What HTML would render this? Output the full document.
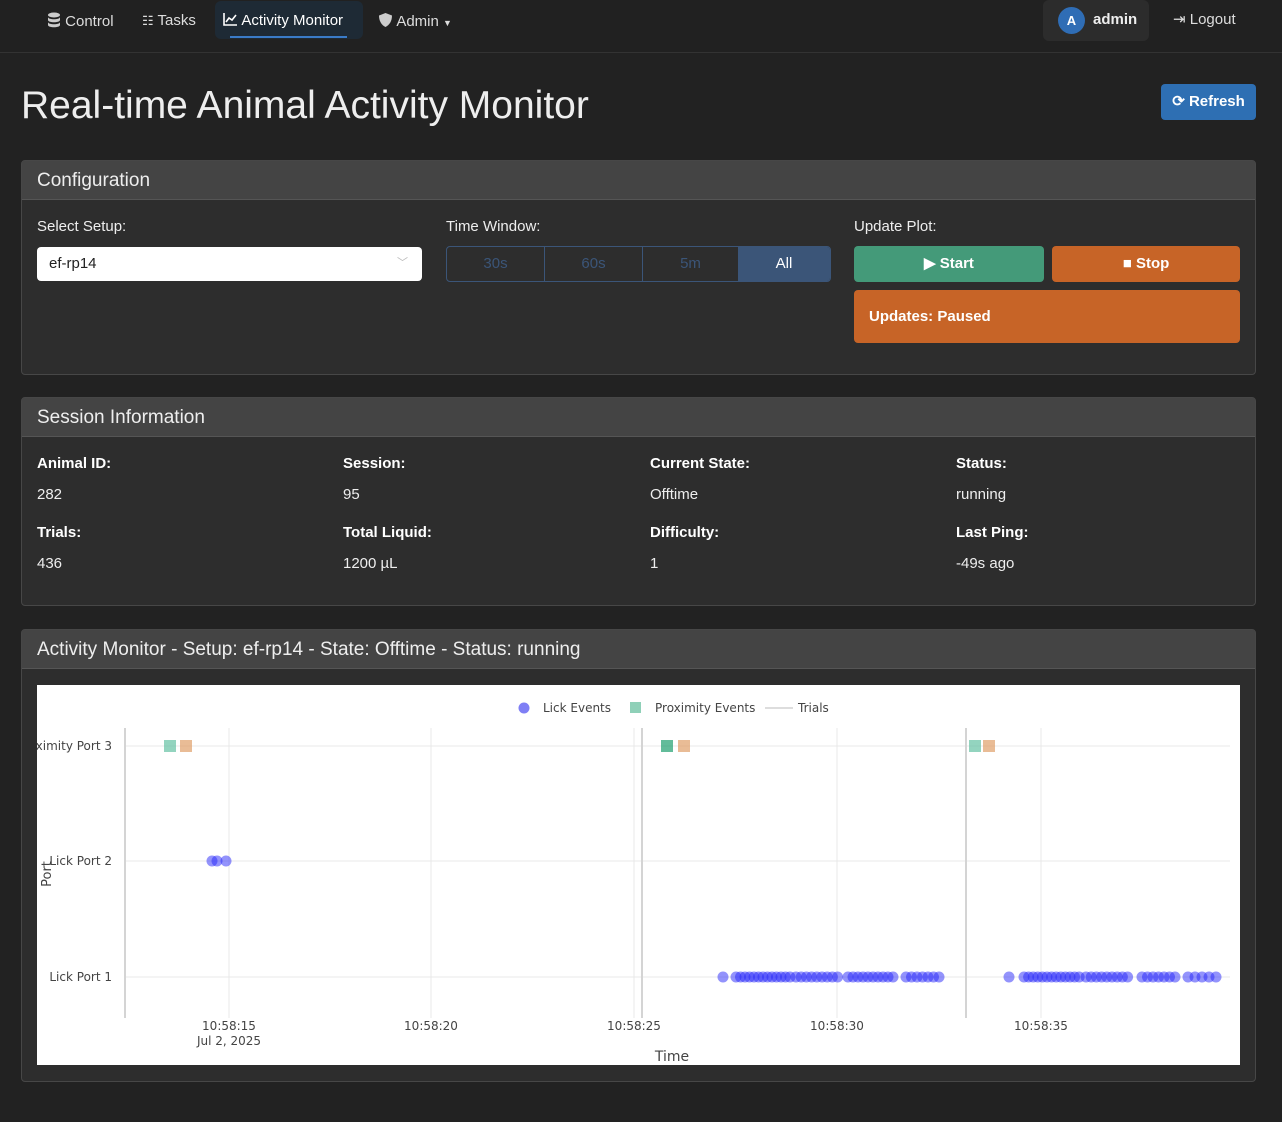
<!DOCTYPE html>
<html><head><meta charset="utf-8"><style>
*{box-sizing:border-box;margin:0;padding:0}
body{width:1282px;height:1122px;background:#222;font-family:"Liberation Sans",sans-serif;color:#fff;position:relative;overflow:hidden}
.a{position:absolute}
.nav{left:0;top:0;width:1282px;height:53px;background:#212121;border-bottom:1px solid #333}
.ni{font-size:15px;color:#ddd;top:12px}
.card{background:#2d2d2d;border:1px solid #474747;border-radius:4px}
.ch{position:absolute;left:0;top:0;right:0;height:39px;background:#444;border-bottom:1px solid #555;font-size:19px;color:#eee;padding:9px 15px}
.lbl{font-size:15px;color:#eee}
.b{font-weight:bold;font-size:15px}
.v{font-size:15px;color:#eee}
</style></head><body>
<div class="a nav"></div>
<div class="a ni" style="left:47px"><svg width="14" height="16" viewBox="0 0 14 16" style="vertical-align:-2px"><ellipse cx="7" cy="3" rx="6" ry="2.5" fill="#ccc"/><path d="M1 5c0 3 12 3 12 0v3c0 3-12 3-12 0zM1 10c0 3 12 3 12 0v3c0 3-12 3-12 0z" fill="#ccc"/></svg> Control</div>
<div class="a ni" style="left:142px"><span style="font-size:13px">☷</span> Tasks</div>
<div class="a" style="left:215px;top:1px;width:148px;height:38px;background:#1e2a35;border-radius:6px"></div>
<div class="a" style="left:230px;top:36px;width:117px;height:2px;background:#3a7bc8"></div>
<div class="a ni" style="left:223px;color:#fff"><svg width="15" height="14" viewBox="0 0 15 14" style="vertical-align:-1px"><path d="M1 1v12h13" stroke="#fff" stroke-width="1.6" fill="none"/><path d="M3 10l3-4 3 2 4-5" stroke="#fff" stroke-width="1.6" fill="none"/></svg> Activity Monitor</div>
<div class="a ni" style="left:378px"><svg width="15" height="16" viewBox="0 0 15 16" style="vertical-align:-2px"><path d="M7.5 1L14 3.5C14 9 11.5 13 7.5 15C3.5 13 1 9 1 3.5Z" fill="#ccc"/></svg> Admin <span style="font-size:9px">▼</span></div>
<div class="a" style="left:1043px;top:0;width:106px;height:41px;background:#2c2c2c;border-radius:6px"></div>
<div class="a" style="left:1058px;top:7px;width:27px;height:27px;border-radius:50%;background:#2f6db5;font-size:13px;font-weight:bold;text-align:center;line-height:27px">A</div>
<div class="a" style="left:1093px;top:11px;font-size:15px;font-weight:bold;color:#eee">admin</div>
<div class="a ni" style="left:1173px;top:10px">⇥ Logout</div>

<div class="a" style="left:21px;top:84px;font-size:39px;color:#eee">Real-time Animal Activity Monitor</div>
<div class="a" style="left:1161px;top:84px;width:95px;height:36px;background:#2e6fb3;border-radius:4px;font-size:15px;font-weight:bold;text-align:center;line-height:36px">⟳ Refresh</div>

<div class="a card" style="left:21px;top:160px;width:1235px;height:215px"><div class="ch">Configuration</div></div>
<div class="a lbl" style="left:37px;top:218px">Select Setup:</div>
<div class="a" style="left:37px;top:247px;width:385px;height:34px;background:#fff;border-radius:4px;color:#222;font-size:15px;padding:8px 12px">ef-rp14<span style="position:absolute;right:14px;top:7px;color:#bbb;font-size:11px">﹀</span></div>
<div class="a lbl" style="left:446px;top:218px">Time Window:</div>
<div class="a" style="left:446px;top:246px;width:385px;height:36px;border:1px solid #3b5578;border-radius:4px;overflow:hidden;display:flex;font-size:15px;color:#3b5578">
<div style="width:98px;border-right:1px solid #3b5578;text-align:center;line-height:34px">30s</div>
<div style="width:98px;border-right:1px solid #3b5578;text-align:center;line-height:34px">60s</div>
<div style="width:95px;text-align:center;line-height:34px">5m</div>
<div style="flex:1;background:#3b5578;color:#fff;text-align:center;line-height:34px">All</div></div>
<div class="a lbl" style="left:854px;top:218px">Update Plot:</div>
<div class="a" style="left:854px;top:246px;width:190px;height:36px;background:#449a79;border-radius:4px;font-size:15px;font-weight:bold;text-align:center;line-height:36px">▶ Start</div>
<div class="a" style="left:1052px;top:246px;width:188px;height:36px;background:#c76427;border-radius:4px;font-size:15px;font-weight:bold;text-align:center;line-height:36px">■ Stop</div>
<div class="a" style="left:854px;top:290px;width:386px;height:53px;background:#c76427;border-radius:4px;font-size:15px;font-weight:bold;padding:18px 15px">Updates: Paused</div>

<div class="a card" style="left:21px;top:397px;width:1235px;height:209px"><div class="ch">Session Information</div></div>
<div class="a b" style="left:37px;top:455px">Animal ID:</div><div class="a v" style="left:37px;top:486px">282</div>
<div class="a b" style="left:343px;top:455px">Session:</div><div class="a v" style="left:343px;top:486px">95</div>
<div class="a b" style="left:650px;top:455px">Current State:</div><div class="a v" style="left:650px;top:486px">Offtime</div>
<div class="a b" style="left:956px;top:455px">Status:</div><div class="a v" style="left:956px;top:486px">running</div>
<div class="a b" style="left:37px;top:524px">Trials:</div><div class="a v" style="left:37px;top:555px">436</div>
<div class="a b" style="left:343px;top:524px">Total Liquid:</div><div class="a v" style="left:343px;top:555px">1200 µL</div>
<div class="a b" style="left:650px;top:524px">Difficulty:</div><div class="a v" style="left:650px;top:555px">1</div>
<div class="a b" style="left:956px;top:524px">Last Ping:</div><div class="a v" style="left:956px;top:555px">-49s ago</div>

<div class="a card" style="left:21px;top:629px;width:1235px;height:453px"><div class="ch">Activity Monitor - Setup: ef-rp14 - State: Offtime - Status: running</div></div>
<svg class="a" style="left:37px;top:685px" width="1203" height="380" viewBox="37 685 1203 380" font-family="DejaVu Sans, sans-serif" font-size="12" fill="#444">
<rect x="37" y="685" width="1203" height="380" fill="#fff"/>
<g stroke="#e8e8e8" stroke-width="1">
<line x1="125" y1="746" x2="1230" y2="746"/><line x1="125" y1="861" x2="1230" y2="861"/><line x1="125" y1="977" x2="1230" y2="977"/>
<line x1="229" y1="728" x2="229" y2="1018"/><line x1="431" y1="728" x2="431" y2="1018"/><line x1="634" y1="728" x2="634" y2="1018"/><line x1="837" y1="728" x2="837" y2="1018"/><line x1="1041" y1="728" x2="1041" y2="1018"/>
</g>
<g stroke="#d4d4d4" stroke-width="2"><line x1="125" y1="728" x2="125" y2="1018"/><line x1="642" y1="728" x2="642" y2="1018"/><line x1="966" y1="728" x2="966" y2="1018"/></g>
<g font-size="12" fill="#444" text-anchor="end"><text x="112" y="750">Proximity Port 3</text><text x="112" y="865">Lick Port 2</text><text x="112" y="981">Lick Port 1</text></g>
<text x="51" y="874" transform="rotate(-90 51 874)" font-size="13" text-anchor="middle">Port</text>
<g text-anchor="middle"><text x="229" y="1030">10:58:15</text><text x="229" y="1045">Jul 2, 2025</text><text x="431" y="1030">10:58:20</text><text x="634" y="1030">10:58:25</text><text x="837" y="1030">10:58:30</text><text x="1041" y="1030">10:58:35</text><text x="672" y="1061" font-size="14">Time</text></g>
<circle cx="524" cy="708" r="5.5" fill="#7f7ff5"/><text x="543" y="712">Lick Events</text>
<rect x="630" y="702" width="11" height="11" fill="#8fd0b8"/><text x="655" y="712">Proximity Events</text>
<line x1="765" y1="708" x2="793" y2="708" stroke="#ddd" stroke-width="2"/><text x="798" y="712">Trials</text>
<g opacity="0.7"><rect x="164" y="740" width="12" height="12" fill="#66c2a5"/><rect x="180" y="740" width="12" height="12" fill="#e0a06a"/>
<rect x="661" y="740" width="12" height="12" fill="#20a070"/><rect x="678" y="740" width="12" height="12" fill="#e0a06a"/>
<rect x="969" y="740" width="12" height="12" fill="#66c2a5"/><rect x="983" y="740" width="12" height="12" fill="#e0a06a"/></g>
<g id="d" fill="rgb(40,40,250)" fill-opacity="0.5"><circle cx="212" cy="861" r="5.5"/><circle cx="217" cy="861" r="5.5"/><circle cx="226" cy="861" r="5.5"/></g>
</svg>
<script>
var g=document.getElementById('d'),xs=[723];
function r(a,b,s){for(var x=a;x<=b;x+=s)xs.push(x)}
r(736,790,4.5);r(796,838,5.2);r(848,894,5);r(906,944,5.5);xs.push(1009);r(1024,1080,4.6);r(1086,1128,5.2);r(1142,1180,5.5);r(1188,1217,7);
xs.forEach(function(x){var c=document.createElementNS('http://www.w3.org/2000/svg','circle');c.setAttribute('cx',x);c.setAttribute('cy',977);c.setAttribute('r',5.5);g.appendChild(c)});
</script>
</body></html>
